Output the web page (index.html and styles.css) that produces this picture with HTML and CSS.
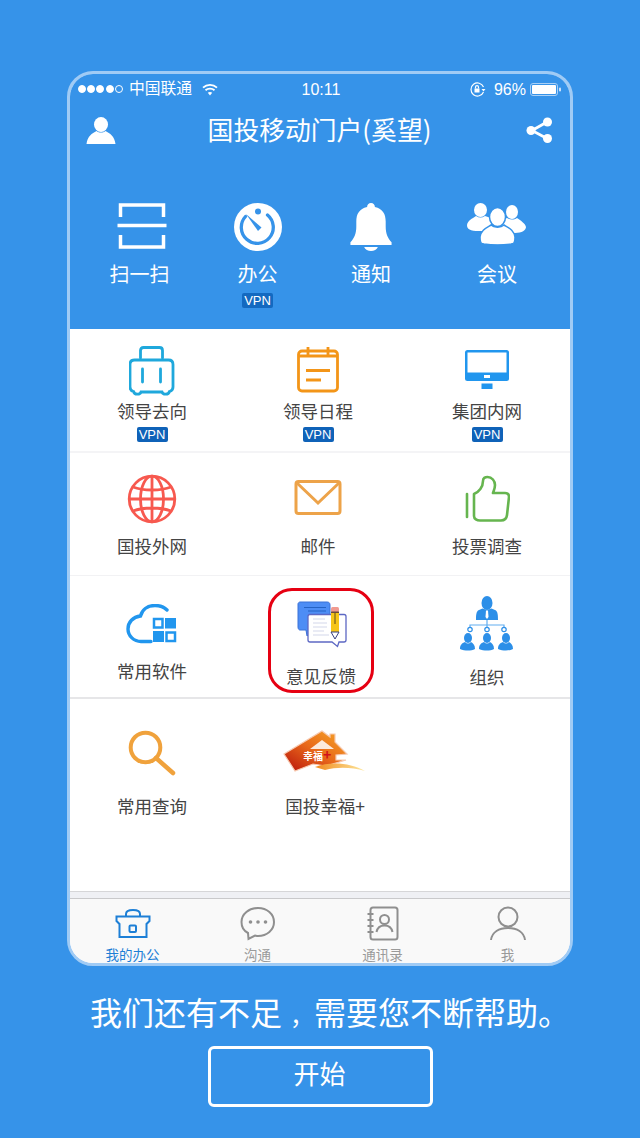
FILE: index.html
```html
<!DOCTYPE html>
<html lang="zh-CN">
<head>
    <meta charset="UTF-8">
    <title>国投移动门户</title>
    <link rel="stylesheet" href="styles.css">
</head>
<body>

    <div class="phone">
        <div class="top">
            <div class="status">
                <div class="status-left">
                    <span class="dot"></span><span class="dot"></span><span class="dot"></span><span class="dot"></span><span class="dot dot-off"></span>
                    <span class="carrier">中国联通</span>
                    <svg class="wifi" width="16" height="13" viewBox="0 0 16 13" fill="none" stroke="#fff" stroke-width="1.8">
                        <path d="M1 4.6C5 .9 11 .9 15 4.6"/>
                        <path d="M3.5 7.2C6 5 10 5 12.500 7.200"/>
                        <path d="M8 12.500L5.800 9.700C7 8.800 9 8.800 10.200 9.700Z" fill="#fff" stroke="none"/>
                    </svg>
                </div>
                <div class="time">10:11</div>
                <div class="status-right">
                    <svg width="16" height="15" viewBox="0 0 16 15" fill="none" stroke="#fff" stroke-width="1.2">
                        <path d="M13.500 5A6.500 6.500 0 1 0 13.500 10"/>
                        <path d="M11.500 7h4l-2 2.500z" fill="#fff" stroke="none"/>
                        <rect x="4.500" y="6.500" width="5" height="4" fill="#fff" stroke="none"/>
                        <path d="M5.500 6.500V5.200a1.500 1.500 0 0 1 3 0V6.500"/>
                    </svg>
                    <span class="percent">96%</span>
                    <svg width="31" height="13" viewBox="0 0 31 13">
                        <rect x=".5" y=".5" width="27" height="12" rx="2.500" fill="none" stroke="#a9d0f6"/>
                        <rect x="2" y="2" width="24" height="9" rx="1" fill="#fff"/>
                        <rect x="29" y="4.500" width="2" height="4" rx="1" fill="#cfe4fa"/>
                    </svg>
                </div>
            </div>

            <div class="nav">
                <svg width="30" height="27" viewBox="0 0 30 27" fill="#fff">
                    <ellipse cx="15" cy="7.500" rx="7" ry="7.500"/>
                    <path d="M10.500 14C6 16.500 1.500 19 .5 27H29.500C28.500 19 24 16.500 19.500 14C17 16 13 16 10.500 14Z"/>
                </svg>
                <div class="title">国投移动门户(奚望)</div>
                <svg width="28" height="27" viewBox="0 0 28 27" fill="#fff" stroke="#fff">
                    <path d="M21 5L6 13.500L21 21.500" fill="none" stroke-width="2.800"/>
                    <circle cx="21.500" cy="5" r="4.500" stroke="none"/>
                    <circle cx="5" cy="13.500" r="4.500" stroke="none"/>
                    <circle cx="21.500" cy="21.500" r="4.500" stroke="none"/>
                </svg>
            </div>

            <div class="quick">
                <div class="quick-item">
                    <svg width="55" height="48" viewBox="0 0 55 48" fill="none" stroke="#fff" stroke-width="3.500">
                        <path d="M8.500 14V2H51.500V14"/>
                        <path d="M5.500 22.500H54.500"/>
                        <path d="M8.500 32V44H51.500V32"/>
                    </svg>
                    <div class="quick-label">扫一扫</div>
                </div>
                <div class="quick-item">
                    <svg width="48" height="48" viewBox="0 0 48 48">
                        <circle cx="24" cy="24" r="24" fill="#fff"/>
                        <path d="M33.500 12A16 16 0 1 1 11.500 13.500" fill="none" stroke="#3693e9" stroke-width="3.300" stroke-linecap="round"/>
                        <circle cx="24" cy="8.500" r="3" fill="#3693e9"/>
                        <path d="M12 11L27.500 24.500L24 28Z" fill="#3693e9"/>
                    </svg>
                    <div class="quick-label">办公</div>
                    <span class="vpn vpn-top">VPN</span>
                </div>
                <div class="quick-item">
                    <svg width="42" height="48" viewBox="0 0 42 49" fill="#fff">
                        <path d="M21 0C18.500 0 17 1.800 17 4C9 6 6 11 6 19V24C6 31 4 36 0 40V43H42V40C38 36 36 31 36 24V19C36 11 33 6 25 4C25 1.800 23.500 0 21 0Z"/>
                        <path d="M14 45H28C27 48 24 49 21 49S15 48 14 45Z"/>
                    </svg>
                    <div class="quick-label">通知</div>
                </div>
                <div class="quick-item">
                    <svg width="60" height="48" viewBox="0 0 60 48" fill="#fff">
                        <ellipse cx="13.500" cy="7" rx="6.500" ry="7"/>
                        <path d="M9 13C5 16 1 17 0 22C0 26 3 28 12 28H24V15L18 13C15 15 12 15 9 13Z"/>
                        <ellipse cx="45" cy="9" rx="6" ry="7"/>
                        <path d="M40 15L34 18V30H48C55 30 59 27 59 24C58 20 54 18 50 15C47 17 43 17 40 15Z"/>
                        <ellipse cx="30.500" cy="14" rx="8" ry="9.500" stroke="#3693e9" stroke-width="1.500"/>
                        <path d="M24 22C19 25 14 27 13 34C13 40 14 40.500 17 41C24 42 37 42 44 41C47 40.500 48 40 48 34C47 27 42 25 37 22C34 25 27 25 24 22Z" stroke="#3693e9" stroke-width="1.500"/>
                    </svg>
                    <div class="quick-label">会议</div>
                </div>
            </div>
        </div>

        <div class="main">
            <div class="row row-one">
                <div class="item">
                    <svg width="46" height="50" viewBox=".5 0 46 50" fill="none" stroke="#1fa8dc" stroke-width="2.800" stroke-linecap="round">
                        <path d="M12 12V4.500C12 2.500 13 1.500 15 1.500H31C33 1.500 34 2.500 34 4.500V12"/>
                        <path d="M6 14H40C43 14 44.500 15.500 44.500 18.500V41C44.500 44 43 45 41 45.500C40 49 34.500 49 33.500 46H12.500C11.500 49 6 49 5 45.500C3 45 1.500 44 1.500 41V18.500C1.500 15.500 3 14 6 14Z"/>
                        <path d="M14 23V36M32 23V36"/>
                    </svg>
                    <div class="label">领导去向</div>
                    <span class="vpn">VPN</span>
                </div>
                <div class="item">
                    <svg width="42" height="50" viewBox="0 0 42 50" fill="none" stroke="#f39518" stroke-width="2.800">
                        <rect x="1.500" y="5" width="39" height="40" rx="3.500"/>
                        <path d="M11 1V10M31 1V10M1.500 10H40.500"/>
                        <path d="M9 24.500H33M9 34H24"/>
                    </svg>
                    <div class="label">领导日程</div>
                    <span class="vpn">VPN</span>
                </div>
                <div class="item">
                    <svg width="46" height="50" viewBox="0 0 46 50">
                        <rect x="1" y="4" width="44" height="31" rx="2.500" fill="#2196ee"/>
                        <rect x="3.500" y="6.500" width="39" height="20" fill="#fff"/>
                        <rect x="20" y="29" width="6" height="3" fill="#fff"/>
                        <rect x="17.500" y="37.500" width="11" height="5.500" fill="#2196ee"/>
                    </svg>
                    <div class="label">集团内网</div>
                    <span class="vpn">VPN</span>
                </div>
            </div>

            <div class="row row-two">
                <div class="item">
                    <svg width="50" height="50" viewBox="0 0 50 50" fill="none" stroke="#f7594f" stroke-width="2.800">
                        <circle cx="25" cy="25" r="22.800"/>
                        <ellipse cx="25" cy="25" rx="11.500" ry="22.800"/>
                        <path d="M25 2V48M6 13C16 17 34 17 44 13M2.500 25H47.500M6 37C16 33 34 33 44 37"/>
                    </svg>
                    <div class="label">国投外网</div>
                </div>
                <div class="item">
                    <svg width="48" height="50" viewBox="0 0 48 50" fill="none" stroke="#eda349" stroke-width="3">
                        <rect x="2" y="7.500" width="44" height="32" rx="2.500"/>
                        <path d="M3 9L24 29L45 9"/>
                    </svg>
                    <div class="label">邮件</div>
                </div>
                <div class="item">
                    <svg width="46" height="50" viewBox="0 0 46 46" fill="none" stroke="#66b54f" stroke-width="2.600" stroke-linecap="round" stroke-linejoin="round">
                        <path d="M3 18V41"/>
                        <path d="M10 40V18C15 16 19 11 19 5C19 2 21 1 23.500 1C28 1 31 5 31 9C31 12 30 14 29 17H41C44 17 45 19 45 21L43 39C42.500 43 40 44.500 37 44.500H16C13 44.500 10 43 10 40Z"/>
                    </svg>
                    <div class="label">投票调查</div>
                </div>
            </div>

            <div class="row row-three">
                <div class="item item-cloud">
                    <svg width="52" height="40" viewBox="0 0 52 40">
                        <path d="M41 6C38 3 34 1.500 29 1.500C21 1.500 16 6 14.500 12C7 13 2 18 2 25C2 32 8 37.500 15 37.500H25" fill="none" stroke="#2196ee" stroke-width="3.400" stroke-linecap="round"/>
                        <rect x="28" y="15" width="8.500" height="8.500" fill="none" stroke="#2196ee" stroke-width="2.500"/>
                        <rect x="39" y="14" width="11" height="10.500" fill="#2196ee"/>
                        <rect x="27" y="27" width="11" height="11" fill="#2196ee"/>
                        <rect x="40.500" y="28.500" width="8.500" height="8.500" fill="none" stroke="#2196ee" stroke-width="2.500"/>
                    </svg>
                    <div class="label">常用软件</div>
                </div>
                <div class="item item-feedback">
                    <svg width="55" height="52" viewBox="0 0 55 52">
                        <path d="M6 4H33C35 4 36 5 36 7V29C36 31 35 32 33 32H20L13 38L12 32H6C5 32 4 31 4 29V6C4 5 5 4 6 4Z" fill="#4d8df5" stroke="#3a72d8"/>
                        <path d="M10 9.500H32M14 13H32" stroke="#2462c4" stroke-width="1.200"/>
                        <path d="M16 16.500H50C51 16.500 52 17.500 52 18.500V42C52 43 51 44 50 44H45L43.500 48.500L38 44H16C15 44 14 43 14 42V18.500C14 17.500 15 16.500 16 16.500Z" fill="#fff" stroke="#5d68c4" stroke-width="1.300"/>
                        <path d="M19 21H31M19 25H33M19 29H33M19 33H30M19 37H35" stroke="#d3d7ea" stroke-width="1"/>
                        <rect x="37" y="9" width="8" height="5" rx="1.500" fill="#f09a90"/>
                        <rect x="37" y="13.500" width="8" height="1.500" fill="#6b4a3a"/>
                        <rect x="37" y="15" width="8" height="19" fill="#f6c518"/>
                        <path d="M37 34H45L41 41Z" fill="#fff" stroke="#37407f"/>
                        <path d="M41 15V26" stroke="#5a4a20" stroke-width="1"/>
                    </svg>
                    <div class="label">意见反馈</div>
                </div>
                <div class="item item-org">
                    <svg width="54" height="55" viewBox="0 0 54 55" fill="#2c8fe8">
                        <ellipse cx="27" cy="7" rx="5.500" ry="7"/>
                        <path d="M22.500 12.500L19 14C16 15 16 20 16 24H38C38 20 38 15 35 14L31.500 12.500L27 14Z"/>
                        <path d="M26 14.500H28L28.500 21L27 23L25.500 21Z" fill="#fff"/>
                        <path d="M27 24V29M10 33V29H44V33M27 29V33" fill="none" stroke="#62aef0" stroke-width="1.200"/>
                        <circle cx="10" cy="33.500" r="2.200" fill="#fff" stroke="#2c8fe8" stroke-width="1.200"/>
                        <circle cx="27" cy="33.500" r="2.200" fill="#fff" stroke="#2c8fe8" stroke-width="1.200"/>
                        <circle cx="44" cy="33.500" r="2.200" fill="#fff" stroke="#2c8fe8" stroke-width="1.200"/>
                        <ellipse cx="8" cy="42" rx="4" ry="5"/>
                        <path d="M5 46C2 47 0 49 0 53C5 55 11 55 15 53C15 49 13 47 11 46C9 48 7 48 5 46Z"/>
                        <ellipse cx="27" cy="42" rx="4" ry="5"/>
                        <path d="M24 46C21 47 19 49 19 53C24 55 30 55 34 53C34 49 32 47 30 46C28 48 26 48 24 46Z"/>
                        <ellipse cx="46" cy="42" rx="4" ry="5"/>
                        <path d="M43 46C40 47 38 49 38 53C43 55 49 55 53 53C53 49 51 47 49 46C47 48 45 48 43 46Z"/>
                    </svg>
                    <div class="label">组织</div>
                </div>
            </div>

            <div class="row row-four">
                <div class="item">
                    <svg width="48" height="46" viewBox="0 0 48 46" fill="none" stroke="#f0a23c">
                        <circle cx="17.500" cy="17.500" r="14.800" stroke-width="4"/>
                        <path d="M28 28L45 43" stroke-width="4.500" stroke-linecap="round"/>
                    </svg>
                    <div class="label">常用查询</div>
                </div>
                <div class="item">
                    <svg width="84" height="46" viewBox="0 0 84 46">
                        <defs>
                            <linearGradient id="roof" x1="0" y1="1" x2="1" y2="0">
                                <stop offset="0" stop-color="#b8120c"/>
                                <stop offset=".5" stop-color="#e8681a"/>
                                <stop offset="1" stop-color="#f7a928"/>
                            </linearGradient>
                            <linearGradient id="swoosh" x1="0" y1="0" x2="1" y2="0">
                                <stop offset="0" stop-color="#f18a1c"/>
                                <stop offset="1" stop-color="#fde9a0"/>
                            </linearGradient>
                        </defs>
                        <path d="M1 24L39 1L47 7V4H52V12L64 24L53 25V30L63 30L43 36L30 34L12 41Z" fill="url(#roof)" stroke="#f7c9b0" stroke-width="1.200"/>
                        <path d="M39 10L27 19H51Z" fill="#fff" fill-opacity=".85"/>
                        <path d="M32 37C48 31 68 33 82 41C68 37 54 37 42 40Z" fill="url(#swoosh)"/>
                        <text class="logo-text" x="20" y="30">幸福<tspan class="logo-plus">+</tspan></text>
                    </svg>
                    <div class="label">国投幸福+</div>
                </div>
            </div>
        </div>

        <div class="band"></div>

        <div class="tabs">
            <div class="tab tab-on">
                <svg width="36" height="35" viewBox="0 0 36 35" fill="none" stroke="#1d7fd6" stroke-width="2">
                    <path d="M1.500 10.500H34.500V15L31.500 18V31H4.500V18L1.500 15Z"/>
                    <path d="M11 10V8C11 5 14 4 18 4S25 5 25 8V10"/>
                    <rect x="14.500" y="19.500" width="6.500" height="6.500" rx="1"/>
                </svg>
                <div class="tab-label">我的办公</div>
            </div>
            <div class="tab">
                <svg width="36" height="35" viewBox="0 0 36 35" fill="none" stroke="#8f8f8f" stroke-width="2">
                    <path d="M18 2C9 2 1.500 8 1.500 16C1.500 21 4 25 8 27L8.500 33L15 29.500C16 29.700 17 30 18 30C27 30 34 24 34 16C34 8 27 2 18 2Z"/>
                    <circle cx="10.500" cy="16" r="1.800" fill="#8f8f8f" stroke="none"/>
                    <circle cx="18" cy="16" r="1.800" fill="#8f8f8f" stroke="none"/>
                    <circle cx="25.500" cy="16" r="1.800" fill="#8f8f8f" stroke="none"/>
                </svg>
                <div class="tab-label">沟通</div>
            </div>
            <div class="tab">
                <svg width="34" height="35" viewBox="0 0 34 35" fill="none" stroke="#8f8f8f" stroke-width="2">
                    <rect x="4.500" y="1.500" width="27" height="32" rx="2.500"/>
                    <path d="M1.500 8H7.500M1.500 14H7.500M1.500 20H7.500M1.500 26H7.500"/>
                    <circle cx="18.500" cy="13.500" r="4.500"/>
                    <path d="M10.500 26C11.500 21 15 19.500 18.500 19.500S25.500 21 26.500 26"/>
                </svg>
                <div class="tab-label">通讯录</div>
            </div>
            <div class="tab">
                <svg width="36" height="35" viewBox="0 0 36 35" fill="none" stroke="#8f8f8f" stroke-width="2">
                    <circle cx="18" cy="11" r="9.500"/>
                    <path d="M1 34C2 26 9 22 18 22S34 26 35 34"/>
                </svg>
                <div class="tab-label">我</div>
            </div>
        </div>
    </div>

    <div class="slogan">我们还有不足<span class="comma">，</span>需要您不断帮助。</div>
    <button class="start">开始</button>

</body>
</html>
```

FILE: styles.css
```css
body {
    margin: 0;
    height: 1138px;
    overflow: hidden;
    background: #3693e9;
    font-family: "Noto Sans CJK SC", "Liberation Sans", sans-serif;
    color: #fff;
}
svg {
    display: block;
}
.phone {
    box-sizing: border-box;
    width: 506px;
    height: 895px;
    margin: 71px 0 0 67px;
    border: 3px solid #a0cbf5;
    border-radius: 26px;
    overflow: hidden;
    display: flex;
    flex-direction: column;
    background: #fff;
}
.top {
    background: #3693e9;
    padding-bottom: 21px;
}
.status {
    height: 28px;
    padding: 0 9px 0 8px;
    display: grid;
    grid-template-columns: 1fr auto 1fr;
    align-items: center;
    font-size: 15.800px;
    line-height: 28px;
}
.status-left, .status-right {
    display: flex;
    align-items: center;
}
.status-right {
    justify-content: flex-end;
}
.dot {
    box-sizing: border-box;
    width: 8px;
    height: 8px;
    margin-right: 1.200px;
    border-radius: 50%;
    background: #fff;
    border: 1px solid #fff;
}
.dot-off {
    background: transparent;
}
.carrier {
    margin-left: 5px;
    padding-bottom: 2px;
}
.wifi {
    margin-left: 10px;
}
.time {
    font-family: "Liberation Sans", sans-serif;
    font-size: 16px;
    padding: 2px 0 0 3px;
}
.percent {
    font-family: "Liberation Sans", sans-serif;
    font-size: 16px;
    margin: 0 4px 0 8px;
    padding-top: 1px;
}
.nav {
    height: 56px;
    padding: 0 16px;
    display: flex;
    justify-content: space-between;
    align-items: center;
}
.title {
    font-size: 25.800px;
    line-height: 34px;
    padding: 0 3px 3px 0;
}
.quick {
    padding-top: 45px;
    display: grid;
    grid-template-columns: 139px 97px 130px 122px;
}
.quick-item {
    display: flex;
    flex-direction: column;
    align-items: center;
}
.quick-label {
    margin-top: 11px;
    font-size: 20px;
    line-height: 24px;
}
.vpn {
    display: block;
    width: 31px;
    height: 15px;
    margin-top: 7px;
    border-radius: 2px;
    background: #0f62b8;
    color: #fff;
    font-family: "Liberation Sans", sans-serif;
    font-size: 13px;
    line-height: 15px;
    text-align: center;
}
.vpn-top {
    margin-top: 7px;
    background: #1369c0;
}
.main {
    flex: 1;
    display: flex;
    flex-direction: column;
}
.row {
    box-sizing: border-box;
    display: grid;
    align-items: start;
    color: #444;
}
.row-one {
    height: 124px;
    padding-top: 17px;
    grid-template-columns: 164px 168px 170px;
    border-bottom: 2px solid #f4f4f6;
}
.row-two {
    height: 123px;
    padding-top: 21px;
    grid-template-columns: 164px 168px 170px;
    border-bottom: 1px solid #f2f2f4;
}
.row-three {
    height: 123px;
    padding-top: 12px;
    grid-template-columns: 164px 174px 158px;
    border-bottom: 2px solid #e6e6e8;
}
.row-four {
    flex: 1;
    padding-top: 31px;
    grid-template-columns: 164px 182px;
}
.item {
    display: flex;
    flex-direction: column;
    align-items: center;
}
.label {
    margin-top: 5px;
    font-size: 17.500px;
    line-height: 20px;
    white-space: nowrap;
}
.row-one .vpn {
    margin-top: 6px;
}
.row-two .label {
    margin-top: 12px;
}
.item-cloud {
    padding-top: 16px;
}
.item-cloud .label {
    margin-top: 17px;
}
.item-feedback {
    box-sizing: border-box;
    justify-self: center;
    width: 106px;
    height: 105px;
    padding-top: 7px;
    border: 3px solid #e60012;
    border-radius: 24px;
}
.item-feedback .label {
    margin-top: 16px;
}
.item-org {
    padding-top: 8px;
}
.item-org .label {
    margin-top: 16px;
}
.row-four .label {
    margin-top: 20px;
}
.logo-text {
    font-size: 10px;
    font-weight: bold;
    fill: #fff;
}
.logo-plus {
    fill: #d0121b;
    font-size: 14px;
}
.band {
    box-sizing: border-box;
    height: 8px;
    background: #eff0f4;
    border-top: 1px solid #d6d6d8;
    border-bottom: 1px solid #c9c9cb;
}
.tabs {
    height: 64px;
    background: #f9f9f9;
    display: grid;
    grid-template-columns: repeat(4, 125px);
}
.tab {
    padding-top: 7px;
    display: flex;
    flex-direction: column;
    align-items: center;
    color: #9a9a9a;
}
.tab-on {
    color: #1d7fd6;
}
.tab-label {
    margin-top: 5px;
    font-size: 13.500px;
    line-height: 16px;
}
.slogan {
    height: 44px;
    margin-top: 23px;
    padding-left: 20px;
    font-size: 32px;
    line-height: 44px;
    text-align: center;
    white-space: nowrap;
}
.comma {
    padding-left: 8px;
    font-size: 24px;
    line-height: 0;
}
.start {
    display: block;
    box-sizing: border-box;
    width: 225px;
    height: 61px;
    margin: 13px 0 0 208px;
    padding: 0 2px 9px 0;
    background: transparent;
    border: 3px solid #fff;
    border-radius: 6px;
    color: #fff;
    font-family: "Noto Sans CJK SC", sans-serif;
    font-size: 26px;
}
```
